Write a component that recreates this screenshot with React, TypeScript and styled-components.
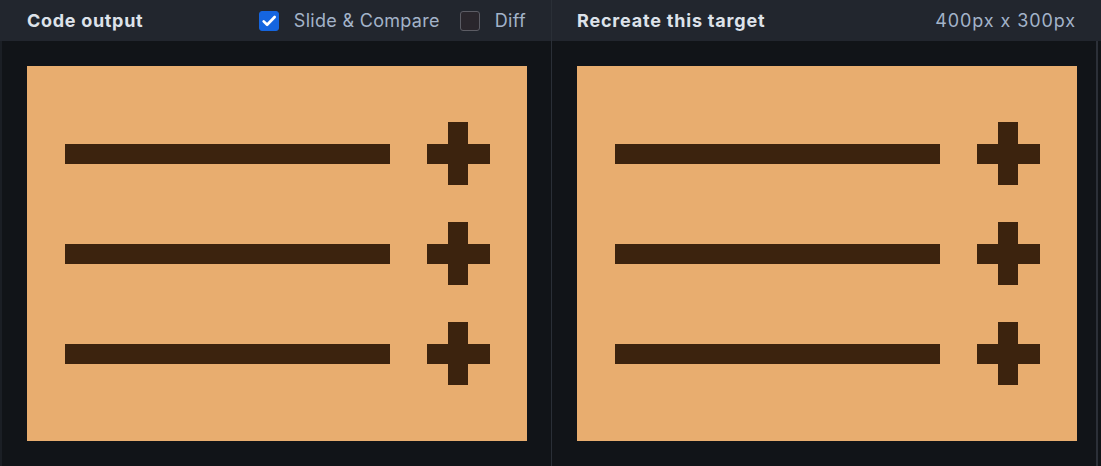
import styled, { createGlobalStyle } from "styled-components";

const GlobalStyle = createGlobalStyle`
  html, body {
    margin: 0;
    padding: 0;
    background: #111418;
    font-family: Inter, "Noto Sans", "Liberation Sans", sans-serif;
  }
  * {
    box-sizing: border-box;
  }
`;

const Layout = styled.div`
  display: flex;
  width: 1101px;
  height: 466px;
  background: #111418;
  overflow: hidden;
`;

const Panel = styled.section<{ $side: "left" | "right" }>`
  display: flex;
  flex-direction: column;
  width: ${({ $side }) => ($side === "left" ? "552px" : "549px")};
  border-right: ${({ $side }) => ($side === "left" ? "1px solid #2a2f37" : "none")};
`;

const Header = styled.header<{ $side: "left" | "right" }>`
  display: flex;
  align-items: center;
  justify-content: space-between;
  height: 41px;
  padding: 0 25px 0 ${({ $side }) => ($side === "left" ? "27px" : "25px")};
  background: #22262e;
`;

const Title = styled.h2<{ $spacing: number }>`
  margin: 0;
  font-size: 18px;
  font-weight: 700;
  color: #dde2ea;
  letter-spacing: ${({ $spacing }) => $spacing}px;
`;

const Controls = styled.div`
  display: flex;
  align-items: center;
`;

const Toggle = styled.label`
  display: flex;
  align-items: center;
  gap: 15px;
  margin-left: 20px;
  font-size: 18px;
  letter-spacing: 0.3px;
  color: #a3b3c9;
  cursor: pointer;
`;

const Box = styled.span<{ $checked?: boolean }>`
  display: grid;
  place-items: center;
  width: 20px;
  height: 20px;
  border-radius: 3px;
  background: ${({ $checked }) => ($checked ? "#1565df" : "#2a262c")};
  border: 1px solid ${({ $checked }) => ($checked ? "#1565df" : "#5c5c64")};
`;

const Size = styled.span`
  font-size: 18px;
  letter-spacing: 0.9px;
  color: #a3b3c9;
`;

const Stage = styled.div<{ $side: "left" | "right" }>`
  flex: 1;
  display: flex;
  align-items: flex-start;
  padding: 25px 0 0 25px;
  border-left: ${({ $side }) => ($side === "left" ? "2px solid #1b1f25" : "none")};
`;

const Scroll = styled.div`
  width: 2px;
  height: calc(100% + 25px);
  margin: -25px 3px 0 auto;
  background: #2c3038;
`;

const Canvas = styled.div`
  display: flex;
  flex-direction: column;
  justify-content: center;
  gap: 37px;
  width: 500px;
  height: 375px;
  padding: 0 37px 0 38px;
  background: #e8ad6f;
`;

const Row = styled.div`
  display: flex;
  align-items: center;
  gap: 37px;
  height: 63px;
`;

const Bar = styled.div`
  flex: 1;
  height: 20px;
  background: #3c230e;
`;

const Plus = styled.div`
  position: relative;
  width: 63px;
  height: 63px;

  &::before,
  &::after {
    content: "";
    position: absolute;
    background: #3c230e;
  }
  &::before {
    left: 0;
    right: 0;
    top: 22px;
    height: 20px;
  }
  &::after {
    top: 0;
    bottom: 0;
    left: 21px;
    width: 20px;
  }
`;

function Check() {
  return (
    <svg width="16" height="16" viewBox="0 0 24 24" fill="none">
      <path d="M4 12.5l5.2 5.2L20.5 6" stroke="#fff" strokeWidth="4" strokeLinecap="round" strokeLinejoin="round" />
    </svg>
  );
}

function Target() {
  return (
    <Canvas>
      {[0, 1, 2].map((i) => (
        <Row key={i}>
          <Bar />
          <Plus />
        </Row>
      ))}
    </Canvas>
  );
}

export default function App() {
  return (
    <>
      <GlobalStyle />
      <Layout>
        <Panel $side="left">
          <Header $side="left">
            <Title $spacing={0.7}>Code output</Title>
            <Controls>
              <Toggle>
                <Box $checked>
                  <Check />
                </Box>
                Slide &amp; Compare
              </Toggle>
              <Toggle>
                <Box />
                Diff
              </Toggle>
            </Controls>
          </Header>
          <Stage $side="left">
            <Target />
          </Stage>
        </Panel>
        <Panel $side="right">
          <Header $side="right">
            <Title $spacing={0.8}>Recreate this target</Title>
            <Size>400px x 300px</Size>
          </Header>
          <Stage $side="right">
            <Target />
            <Scroll />
          </Stage>
        </Panel>
      </Layout>
    </>
  );
}
